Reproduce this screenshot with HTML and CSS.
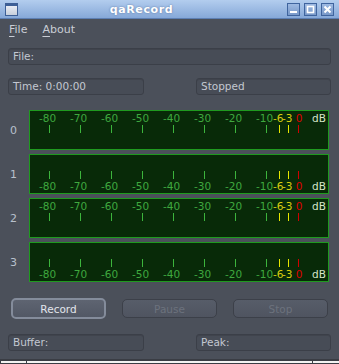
FILE: index.html
```html
<!DOCTYPE html>
<html lang="en">
<head>
    <meta charset="UTF-8">
    <title>qaRecord</title>
    <link rel="stylesheet" href="styles.css">
</head>
<body>

    <div class="window">
        <div class="titlebar">
            <span class="app-icon"></span>
            <span class="title">qaRecord</span>
            <div class="wm-buttons">
                <span class="wm-btn"><svg width="11" height="11" viewBox="0 0 11 11"><rect x="2" y="7" width="7" height="2" fill="#fff"/></svg></span>
                <span class="wm-btn"><svg width="11" height="11" viewBox="0 0 11 11"><rect x="2.5" y="2.5" width="6" height="6" fill="none" stroke="#fff" stroke-width="1.6"/></svg></span>
                <span class="wm-btn"><svg width="11" height="11" viewBox="0 0 11 11"><path d="M2.5 2.5 L8.5 8.5 M8.5 2.5 L2.5 8.5" stroke="#fff" stroke-width="2"/></svg></span>
            </div>
        </div>

        <div class="menubar">
            <span class="menu"><u>F</u>ile</span>
            <span class="menu"><u>A</u>bout</span>
        </div>

        <div class="content">
            <div class="field wide">File:</div>

            <div class="field-row">
                <div class="field">Time: 0:00:00</div>
                <div class="field">Stopped</div>
            </div>

            <div class="meters" id="meters"></div>

            <div class="buttons">
                <button class="btn">Record</button>
                <button class="btn" disabled>Pause</button>
                <button class="btn" disabled>Stop</button>
            </div>

            <div class="field-row bottom">
                <div class="field">Buffer:</div>
                <div class="field">Peak:</div>
            </div>
        </div>

        <div class="frame-bottom">
            <span class="grip left"></span>
            <span class="grip mid"></span>
            <span class="grip right"></span>
        </div>
    </div>

    <script>
        // tick positions in px from the meter's left edge
        const scale = [
            { text: '-80', x: 19, cls: '' },
            { text: '-70', x: 50, cls: '' },
            { text: '-60', x: 81, cls: '' },
            { text: '-50', x: 112, cls: '' },
            { text: '-40', x: 143, cls: '' },
            { text: '-30', x: 174, cls: '' },
            { text: '-20', x: 205, cls: '' },
            { text: '-10', x: 236, cls: '' },
            { text: '-6', x: 249, cls: 'warn' },
            { text: '-3', x: 258, cls: 'warn' },
            { text: '0', x: 268, cls: 'clip' }
        ];

        const meters = document.getElementById('meters');
        for (let i = 0; i < 4; i++) {
            const row = document.createElement('div');
            row.className = 'meter-row';

            const label = document.createElement('span');
            label.className = 'channel';
            label.textContent = i;
            row.appendChild(label);

            // channels 0 and 2 have the scale on top, 1 and 3 underneath
            const meter = document.createElement('div');
            meter.className = 'meter ' + (i % 2 === 0 ? 'top' : 'under');

            scale.forEach(s => {
                const tick = document.createElement('span');
                tick.className = 'tick ' + s.cls;
                tick.style.left = s.x + 'px';
                meter.appendChild(tick);

                const num = document.createElement('span');
                num.className = 'num ' + s.cls;
                num.style.left = s.x + 'px';
                num.textContent = s.text;
                meter.appendChild(num);
            });

            const db = document.createElement('span');
            db.className = 'num db';
            db.textContent = 'dB';
            meter.appendChild(db);

            row.appendChild(meter);
            meters.appendChild(row);
        }
    </script>

</body>
</html>
```

FILE: styles.css
```css
body {
    margin: 0;
    font-family: "DejaVu Sans", sans-serif;
    font-size: 10px;
    background-color: #4b505a;
}
.window {
    width: 339px;
    height: 364px;
    background-color: #4b505a;
    display: flex;
    flex-direction: column;
    overflow: hidden;
}
.titlebar {
    height: 19px;
    background: linear-gradient(#b3cdee, #86a8d8);
    border-bottom: 1px solid #5d7fb3;
    display: flex;
    align-items: center;
    box-sizing: border-box;
}
.app-icon {
    width: 11px;
    height: 9px;
    margin-left: 5px;
    border: 1px solid #3d5f96;
    border-top-width: 3px;
    background: linear-gradient(#e8ecf4, #c7cfdc);
}
.title {
    flex: 1;
    text-align: center;
    color: #fff;
    font-weight: bold;
    font-size: 11px;
    letter-spacing: 0.6px;
    text-shadow: 0 0 2px #56729e;
    margin-right: 22px;
}
.wm-buttons {
    display: flex;
    gap: 4px;
    margin-right: 5px;
}
.wm-btn {
    width: 11px;
    height: 11px;
    border: 1px solid #3f649e;
    background: linear-gradient(#9db9e2, #7898c8);
    display: flex;
}
.menubar {
    height: 20px;
    display: flex;
    align-items: center;
    gap: 15px;
    padding-left: 9px;
    color: #c9cdd5;
    font-size: 11px;
}
.menu u {
    text-decoration-thickness: 1px;
    text-underline-offset: 3px;
}
.content {
    padding: 9px 8px 0 8px;
    flex: 1;
}
.field {
    height: 17px;
    width: 136px;
    box-sizing: border-box;
    border: 1px solid #3b3f48;
    border-radius: 3px;
    background-color: #474c56;
    color: #c3c8d1;
    padding-left: 4px;
    line-height: 15px;
    font-size: 10.5px;
    box-shadow: inset 0 1px 0 #40444d;
}
.field.wide {
    width: 323px;
}
.field-row {
    display: flex;
    justify-content: space-between;
    margin-top: 13px;
}
.field-row .field:last-child {
    width: 135px;
}
.meters {
    margin: 15px 0 0 -8px;
    display: flex;
    flex-direction: column;
    gap: 4px;
}
.meter-row {
    display: flex;
    align-items: center;
}
.channel {
    width: 29px;
    padding-left: 10px;
    box-sizing: border-box;
    color: #b8c0cc;
    font-size: 11px;
}
.meter {
    width: 300px;
    height: 40px;
    box-sizing: border-box;
    border: 1px solid #1f9a1f;
    background-color: #082a08;
    position: relative;
}
.tick {
    position: absolute;
    width: 1px;
    height: 8px;
    background-color: #3cb43c;
}
.meter.top .tick {
    top: 14px;
}
.meter.under .tick {
    top: 16px;
}
.num {
    position: absolute;
    color: #3fa83f;
    font-size: 10.5px;
    line-height: 12px;
    transform: translateX(-58%);
}
.meter.top .num {
    top: 1px;
}
.meter.under .num {
    top: 25px;
}
.tick.warn {
    background-color: #e6e600;
}
.tick.clip {
    background-color: #d00000;
}
.num.warn {
    color: #d8cc10;
}
.num.clip {
    color: #dd0000;
    transform: translateX(-35%);
}
.num.db {
    left: 282px;
    transform: none;
    color: #d6e6c8;
}
.buttons {
    display: flex;
    justify-content: space-between;
    margin: 17px 3px 0 3px;
}
.btn {
    width: 95px;
    height: 19px;
    border-radius: 5px;
    font-family: "DejaVu Sans", sans-serif;
    font-size: 10.5px;
    padding: 0;
    border: 1px solid #3c4049;
    background: linear-gradient(#575d69, #4f5460);
    color: #6c727d;
}
.btn:first-child {
    height: 21px;
    margin-top: -1px;
    border: 2px solid #848c9b;
    background: linear-gradient(#5e6471, #525865);
    color: #e2e6ec;
}
.field-row.bottom {
    margin-top: 15px;
}
.frame-bottom {
    height: 4px;
    display: flex;
    border-top: 1px solid #3a3d44;
    background-color: #3a3d44;
}
.grip {
    height: 2px;
    margin-top: 1px;
    background-color: #f2f2f2;
    border-left: 1px solid #3a3d44;
}
.grip.left {
    width: 25px;
}
.grip.mid {
    width: 285px;
}
.grip.right {
    flex: 1;
}
```
